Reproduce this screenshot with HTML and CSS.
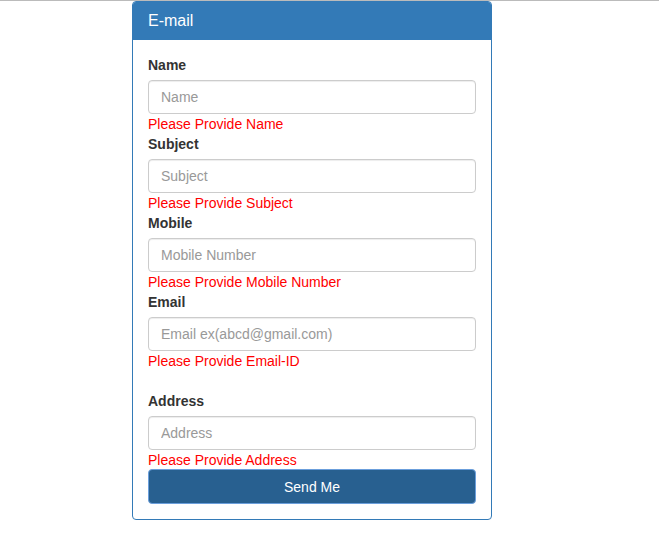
FILE: index.html
```html
<!DOCTYPE html>
<html>
<head>
<meta charset="utf-8">
<link rel="stylesheet" href="styles.css">
</head>
<body>
<div class="topline"></div>
<div class="panel">
  <div class="panel-heading">E-mail</div>
  <form class="panel-body">
    <label class="lbl">Name</label>
    <input class="ctrl" type="text" placeholder="Name">
    <div class="err">Please Provide Name</div>
    <label class="lbl">Subject</label>
    <input class="ctrl" type="text" placeholder="Subject">
    <div class="err">Please Provide Subject</div>
    <label class="lbl">Mobile</label>
    <input class="ctrl" type="text" placeholder="Mobile Number">
    <div class="err">Please Provide Mobile Number</div>
    <label class="lbl">Email</label>
    <input class="ctrl" type="text" placeholder="Email ex(abcd@gmail.com)">
    <div class="err">Please Provide Email-ID</div>
    <div class="spacer"></div>
    <label class="lbl">Address</label>
    <input class="ctrl" type="text" placeholder="Address">
    <div class="err">Please Provide Address</div>
    <button class="btn" type="button">Send Me</button>
  </form>
</div>
</body>
</html>
```
FILE: styles.css
```css
html, body {
  margin: 0;
  padding: 0;
  background: #fff;
  font-family: "Liberation Sans", Arial, sans-serif;
  font-size: 14px;
  line-height: 20px;
  color: #333;
}
.topline {
  height: 1px;
  background: #bbb;
}
.panel {
  width: 360px;
  box-sizing: border-box;
  margin-left: 132px;
  margin-top: 0;
  border: 1px solid #337ab7;
  border-radius: 4px;
  background: #fff;
}
.panel-heading {
  background: #337ab7;
  color: #fff;
  font-size: 16px;
  line-height: 18px;
  padding: 10px 15px;
  border-radius: 3px 3px 0 0;
}
.panel-body {
  display: flex;
  flex-direction: column;
  padding: 15px;
  margin: 0;
}
.lbl {
  font-weight: bold;
  margin-bottom: 5px;
  line-height: 20px;
}
.ctrl {
  display: block;
  box-sizing: border-box;
  width: 100%;
  height: 34px;
  padding: 6px 12px;
  font-family: inherit;
  font-size: 14px;
  color: #555;
  border: 1px solid #ccc;
  border-radius: 4px;
  box-shadow: inset 0 1px 1px rgba(0,0,0,.075);
  margin: 0;
}
.ctrl::placeholder {
  color: #999;
}
.err {
  color: #f00;
  line-height: 20px;
}
.spacer {
  height: 20px;
}
.btn {
  box-sizing: border-box;
  width: 100%;
  height: 35px;
  margin-top: -1px;
  background: #286090;
  color: #fff;
  border: 1px solid #6b9fdc;
  border-radius: 4px;
  font-family: inherit;
  font-size: 14px;
  padding: 6px 12px;
}
```
